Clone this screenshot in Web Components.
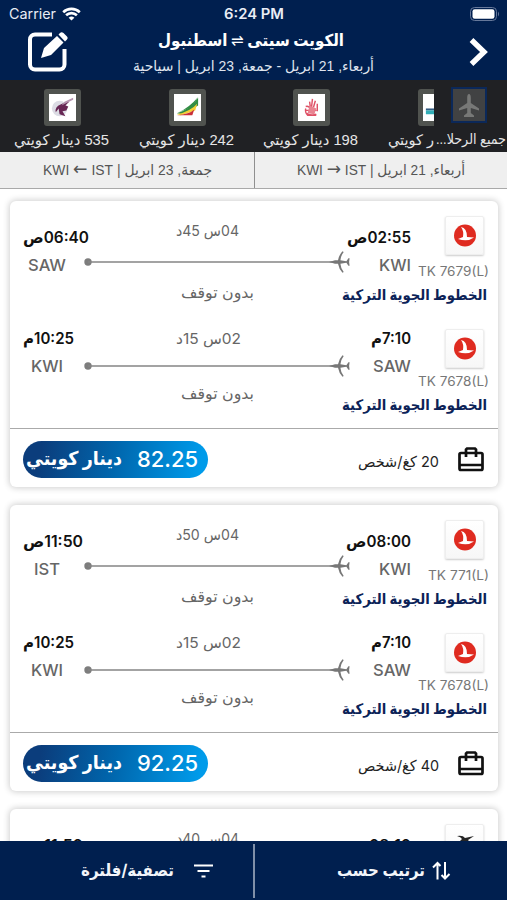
<!DOCTYPE html>
<html lang="ar">
<head>
<meta charset="utf-8">
<title>الكويت سيتى - اسطنبول</title>
<style>
	body {
		margin: 0;
		height: 900px;
		overflow: hidden;
		background: #fff;
		font-family: Inter, "DejaVu Sans", sans-serif;
	}
</style>
</head>
<body>
<flight-results></flight-results>
<script>
/** Attach an open shadow root with the given markup */
function render(el, html) {
	el.attachShadow({mode: "open"}).innerHTML = html;
}

// One line of text, condensed or stretched to the width in its `w` attribute
class FitText extends HTMLElement {
	connectedCallback() {
		if (this.shadowRoot) return;
		const w = Number(this.getAttribute("w"));
		render(this, `
		<style>
			:host {
				display: block;
				flex: none;
				width: ${w}px;
				height: 20px;
				line-height: 20px;
				direction: ltr;
				white-space: nowrap;
			}
			span {
				display: inline-block;
				transform-origin: 0 50%;
			}
		</style>
		<span dir="${this.hasAttribute("ltr") ? "ltr" : "rtl"}"><slot></slot></span>`);
		const span = this.shadowRoot.querySelector("span");
		const natural = span.getBoundingClientRect().width;
		if (natural) span.style.transform = `scaleX(${w / natural})`;
	}
}

class StatusBar extends HTMLElement {
	connectedCallback() {
		render(this, `
		<style>
			:host {
				display: grid;
				grid-template-columns: 1fr auto 1fr;
				align-items: center;
				height: 27px;
				padding: 0 7px 0 9px;
				color: #e9edf5;
				font-size: 14px;
			}
			.carrier { display: flex; align-items: center; gap: 6px; }
			.time { margin-left: -2px; font-weight: 600; }
			.battery { justify-self: end; }
			svg { display: block; }
		</style>
		<div class="carrier">
			<fit-text w="47" ltr>Carrier</fit-text>
			<svg width="19" height="14" viewBox="0 0 19 14" fill="none" stroke="#fff" stroke-width="2.6">
				<path d="M1.2 5.2a12 12 0 0 1 16.6 0M4.1 8.3a7.8 7.8 0 0 1 10.8 0"/>
				<path d="M9.5 13.6 6.6 10.7a4.3 4.3 0 0 1 5.8 0z" fill="#fff" stroke="none"/>
			</svg>
		</div>
		<fit-text class="time" w="60" ltr>6:24 PM</fit-text>
		<svg class="battery" width="30" height="14" viewBox="0 0 30 14">
			<rect x=".5" y=".5" width="26" height="13" rx="4" fill="none" stroke="#66789a"/>
			<rect x="2.5" y="2.3" width="22" height="9.4" rx="2.2" fill="#fff"/>
			<path d="M28 4.5q2 2.5 0 5z" fill="#66789a"/>
		</svg>`);
	}
}

class TripHeader extends HTMLElement {
	connectedCallback() {
		render(this, `
		<style>
			:host {
				display: grid;
				grid-template-columns: 76px 1fr 84px;
				align-items: start;
				box-sizing: border-box;
				height: 53px;
				padding: 0 18px 0 25px;
				color: #fff;
			}
			.edit { margin: 3px 0 0 2px; }
			.next { justify-self: end; margin-top: 10px; }
			.trip {
				display: flex;
				flex-direction: column;
				align-items: center;
				gap: 6px;
				padding-top: 3px;
			}
			.route { margin-right: 5px; font-size: 16.5px; font-weight: bold; }
			.dates { font-family: "Liberation Sans", "DejaVu Sans", sans-serif; font-size: 14.5px; color: #dfe4ee; }
			bdi { font-weight: normal; }
		</style>
		<svg class="edit" width="43" height="43" viewBox="0 0 43 43">
			<path d="M25 4.500H8a5 5 0 0 0-5 5v25a5 5 0 0 0 5 5h24.500a5 5 0 0 0 5-5V19" fill="none" stroke="#fff" stroke-width="4"/>
			<path d="m14 28 3-10L30 6l6.500 6.500L24 25zM31.500 4.500l1.500-1.500q1.500-1.500 3.500 0l3.500 3.500q1.500 1.500 0 3l-2 2z" fill="#fff"/>
		</svg>
		<div class="trip">
			<fit-text class="route" w="186">الكويت سيتى <bdi dir="ltr">⇌</bdi> اسطنبول</fit-text>
			<fit-text class="dates" w="241">أربعاء, 21 ابريل - جمعة, 23 ابريل | سياحية</fit-text>
		</div>
		<svg class="next" width="20" height="30" viewBox="0 0 20 30">
			<path d="m2.500 3 12.500 12-12.500 12" fill="none" stroke="#fff" stroke-width="5.400"/>
		</svg>`);
	}
}

const LOGOS = {
	qatar: `<circle cx="11" cy="15" r="8" fill="#dcdce4"/>
		<path d="M18 8 12 11q-6 2-5 8l3-4 1 6 6 2-3-5 4-1 2-4-3-1 4-4z" fill="#672653"/>
		<path d="m25 4-9 4-3 4 12-6z" fill="#b494ae"/>`,
	ethiopian: `<path d="M25 3 19 13 3 20Q16 14 25 3z" fill="#328d43"/>
		<path d="M25 4v8L9 21l-6-1q14-4 22-16z" fill="#328d43"/>
		<path d="m24 10-2 7-15 5-4-1q14-3 21-11z" fill="#f5cf35"/>
		<path d="m21 16-2 6H3q13-1 18-6z" fill="#c93038"/>`,
	falcon: `<g fill="none" stroke="#df5166" stroke-width="1.500">
		<path d="m15 5-1 9M18 7l-2 7M12 8l1 7M8 13q4-1 5 3M8 17h11M9 20q5 3 10 1M20 10v8M8 15q-1 4 2 7h9"/></g>
		<path d="m12 12 7 3-2 6-7-1z" fill="#e88491"/>`,
	coastal: `<path d="m5 4 8 5 8-4-5 6z" fill="#354d5c"/><path d="M3 15h24v2H3z" fill="#315a81"/><path d="M3 17h24v4H3z" fill="#31aeb7"/>`
};

// Airline with its lowest fare: <airline-tile logo="qatar" w="95">fare</airline-tile>
class AirlineTile extends HTMLElement {
	connectedCallback() {
		render(this, `
		<style>
			:host {
				display: flex;
				flex: none;
				flex-direction: column;
				align-items: center;
				width: 124.700px;
				gap: 4px;
				padding-top: 9px;
				color: #e6e6e6;
			}
			.logo {
				width: 27px;
				height: 27px;
				border: 5px solid #50534f;
				border-radius: 3px;
				background: #fff;
			}
			svg { display: block; }
			fit-text { align-self: flex-start; margin-left: 14px; }
		</style>
		<div class="logo"><svg width="27" height="27" viewBox="0 0 28 28">${LOGOS[this.getAttribute("logo")]}</svg></div>
		<fit-text w="${this.getAttribute("w")}"><slot></slot></fit-text>`);
	}
}

class AirlineStrip extends HTMLElement {
	connectedCallback() {
		render(this, `
		<style>
			:host {
				display: flex;
				height: 72px;
				background: #202124;
				font-family: "Liberation Sans", "DejaVu Sans", sans-serif;
				font-size: 14.500px;
			}
			.tiles { display: flex; width: 434px; overflow: hidden; }
			.all {
				display: flex;
				flex-direction: column;
				align-items: center;
				width: 73px;
				gap: 6px;
				padding-top: 7px;
				color: #e6e6e6;
				font-size: 14px;
			}
			.plane {
				width: 32px;
				height: 32px;
				margin-right: 3px;
				border: 2px solid #0b2859;
				background: #414243;
			}
		</style>
		<div class="tiles">
			<airline-tile logo="qatar" w="95">535 دينار كويتي</airline-tile>
			<airline-tile logo="ethiopian" w="95">242 دينار كويتي</airline-tile>
			<airline-tile logo="falcon" w="95">198 دينار كويتي</airline-tile>
			<airline-tile logo="coastal" w="46">ر كويتي</airline-tile>
		</div>
		<div class="all">
			<div class="plane">
				<svg width="32" height="32" viewBox="0 0 32 32">
					<path d="M16 5q1.800 0 1.800 4v5l8.200 5.500v2l-8.200-2.500v5l3.200 2.500v1.500H11V26.500l3.200-2.500v-5L6 21.500v-2l8.200-5.500V9q0-4 1.800-4z" fill="#777877"/>
				</svg>
			</div>
			<fit-text w="70">جميع الرحلا...</fit-text>
		</div>`);
	}
}

class LegTabs extends HTMLElement {
	connectedCallback() {
		render(this, `
		<style>
			:host {
				display: grid;
				grid-template-columns: 254px 1fr;
				box-sizing: border-box;
				height: 37px;
				border-bottom: 1px solid #a9a9a9;
				background: #efefef;
				color: #555;
				font: 14.500px "Liberation Sans", "DejaVu Sans", sans-serif;
			}
			div { display: flex; align-items: center; justify-content: center; }
			div + div { border-left: 1px solid #8f8f8f; }
			b { font: 18px/1 "DejaVu Sans", sans-serif; }
		</style>
		<div><fit-text w="169">جمعة, 23 ابريل | <bdi dir="ltr">KWI <b>←</b> IST</bdi></fit-text></div>
		<div><fit-text w="168">أربعاء, 21 ابريل | <bdi dir="ltr">KWI <b>→</b> IST</bdi></fit-text></div>`);
	}
}

class FlightLeg extends HTMLElement {
	// Texts come as "text|width" pairs, since each is set to its own width
	text(name, cls, extra = "") {
		const [t, w] = this.getAttribute(name).split("|");
		return `<fit-text class="${cls}" w="${w}" ${extra}>${t}</fit-text>`;
	}
	connectedCallback() {
		const turkish = `
			<circle cx="20" cy="19.500" r="11" fill="#df2b20"/>
			<path d="M16 11q6 1 6 10l7 .5q-6 4.500-16 1.500l5-2q1-6-2-10z" fill="#fff"/>`;
		const bird = `
			<path d="M12 12q6-1 8 2l9-2-6 4 4 5-7-4-7 2 4-4q-1-2-5-3z" fill="#252525"/>`;
		render(this, `
		<style>
			:host {
				--start: 27px;
				--code-gap: 7px;
				--mid-start: 20px;
				--line-gap: 9px;
				--stops-gap: 9px;
				--logo-start: 15px;
				--number-gap: 6px;
				display: grid;
				grid-template-columns: 61px 267px 60px 77px;
				height: 112px;
				padding: 0 10px 0 13px;
				color: #666;
			}
			:host([return]) {
				--start: 16px;
				--code-gap: 7px;
				--mid-start: 16px;
				--line-gap: 5px;
				--stops-gap: 6px;
				--logo-start: 16px;
				--number-gap: 3px;
				height: 115px;
			}
			.end { display: flex; flex-direction: column; gap: var(--code-gap); padding-top: var(--start); }
			.from { align-items: flex-end; }
			.under { display: flex; justify-content: center; width: 48px; }
			.time { color: #111; font-size: 15.500px; font-weight: 600; }
			.code { font-size: 16px; font-weight: 500; }
			.mid { padding-top: var(--mid-start); }
			.duration { margin-left: 92px; font-size: 15px; }
			.stops { margin-left: 97px; font-size: 15.500px; }
			.line { display: block; margin: var(--line-gap) 0 var(--stops-gap); }
			.airline { display: flex; flex-direction: column; align-items: flex-end; padding-top: var(--logo-start); }
			.logo {
				box-sizing: border-box;
				width: 39px;
				height: 39px;
				margin-right: 4px;
				border: 1px solid #eee;
				border-radius: 2px;
				background: linear-gradient(#fff, #f7f7f7);
				box-shadow: 0 1px 2px #ccc;
			}
			.logo svg { display: block; margin: -1px; }
			.number { margin-top: var(--number-gap); margin-right: -1px; color: #777; font-size: 13px; }
			.name { margin-top: 4px; margin-right: 1px; color: #0c2358; font-size: 14.500px; font-weight: bold; }
		</style>
		<div class="end">
			${this.text("arrive", "time")}
			${this.hasAttribute("to") ? `<div class="under">${this.text("to", "code", "ltr")}</div>` : ""}
		</div>
		<div class="mid">
			${this.text("duration", "duration")}
			${this.hasAttribute("stops") ? `
			<svg class="line" width="267" height="24" viewBox="0 0 267 24">
				<circle cx="4" cy="12" r="3.700" fill="#7d7d7d"/>
				<path d="M4 12h244" stroke="#858585" stroke-width="1.500"/>
				<path d="m245 12 6-1.700h3q1-5.500 4.500-9l1.200.6q-3 4-3.300 8.400l6 1 2-3h1.200l-.5 3.700.5 3.700h-1.200l-2-3-6 1q.3 4.400 3.300 8.400l-1.200.6q-3.500-3.500-4.500-9h-3z" fill="#777"/>
			</svg>
			${this.text("stops", "stops")}` : ""}
		</div>
		<div class="end from">
			${this.text("depart", "time")}
			${this.hasAttribute("from") ? this.text("from", "code", "ltr") : ""}
		</div>
		<div class="airline">
			<div class="logo"><svg width="39" height="39" viewBox="0 0 39 39">${this.hasAttribute("bird") ? bird : turkish}</svg></div>
			${this.hasAttribute("number") ? this.text("number", "number", "ltr") : ""}
			${this.hasAttribute("airline") ? this.text("airline", "name") : ""}
		</div>`);
	}
}

class FlightCard extends HTMLElement {
	connectedCallback() {
		const price = this.getAttribute("price");
		render(this, `
		<style>
			:host {
				display: block;
				flex: none;
				height: 286px;
				border-radius: 6px;
				background: #fff;
				box-shadow: 0 0 6px 1px #cfcfcf;
			}
			footer {
				display: flex;
				align-items: center;
				justify-content: space-between;
				box-sizing: border-box;
				height: 59px;
				padding: 2px 14px 0 13px;
				border-top: 1px solid #aaa;
			}
			.price {
				display: flex;
				align-items: center;
				box-sizing: border-box;
				width: 185px;
				height: 37px;
				gap: 15px;
				padding-left: 3px;
				border-radius: 19px;
				background: linear-gradient(100deg, #0b3d7c 10%, #0067ae 50%, #009bea 95%);
				color: #fff;
			}
			.amount { font-size: 22px; font-weight: 500; }
			.currency { font-size: 19px; font-weight: bold; }
			.bags { display: flex; align-items: center; gap: 18px; color: #222; font-size: 15px; }
			.bags fit-text { margin: 6px 1px 0 0; }
			.bags svg { margin-top: 1px; }
		</style>
		<slot></slot>
		${price ? `
		<footer>
			<div class="price">
				<fit-text class="currency" w="96">دينار كويتي</fit-text>
				<fit-text class="amount" w="61" ltr>${price}</fit-text>
			</div>
			<div class="bags">
				<fit-text w="81">${this.getAttribute("bags")} كغ/شخص</fit-text>
				<svg width="26" height="25" viewBox="0 0 26 25" fill="none" stroke="#111" stroke-width="2.700">
					<rect x="1.500" y="6" width="23" height="17" rx="1.500"/>
					<path d="M8 10V2.500l1-1h8l1 1V10M2 18h22"/>
				</svg>
			</div>
		</footer>` : ""}`);
	}
}

class ActionBar extends HTMLElement {
	connectedCallback() {
		render(this, `
		<style>
			:host {
				display: grid;
				flex: none;
				grid-template-columns: 1fr 2px 1fr;
				height: 59px;
				background: #001f4f;
				color: #f2f5fa;
				font-size: 16.500px;
				font-weight: bold;
			}
			div { display: flex; align-items: center; }
			.filter { gap: 20px; padding-left: 81px; }
			.sort { gap: 7px; padding-left: 82px; }
			fit-text { margin-top: -1px; }
			i { margin: 3px 0 2px; background: #7f8fa8; }
		</style>
		<div class="filter">
			<fit-text w="93">تصفية/فلترة</fit-text>
			<svg width="20" height="14" viewBox="0 0 20 14" stroke="#fff" stroke-width="2.200">
				<path d="M0 1.500h19M3.500 7h12M7.500 12.500h4"/>
			</svg>
		</div>
		<i></i>
		<div class="sort">
			<fit-text w="88">ترتيب حسب</fit-text>
			<svg width="19" height="20" viewBox="0 0 19 20" fill="none" stroke="#fff" stroke-width="2">
				<path d="M5.500 18.500V2M1 6.500 5.500 2 8.500 5M13 1v16.500M9.500 14l3.500 3.500 4.500-4.500"/>
			</svg>
		</div>`);
	}
}

class FlightResults extends HTMLElement {
	connectedCallback() {
		const shared = `stops="بدون توقف|73" airline="الخطوط الجوية التركية|145"`;
		render(this, `
		<style>
			:host { display: flex; flex-direction: column; width: 507px; height: 900px; }
			header { background: #001f4f; }
			main {
				display: flex;
				flex: 1;
				flex-direction: column;
				gap: 18px;
				min-height: 0;
				padding: 12px 9px 0 10px;
				overflow: hidden;
			}
		</style>
		<header>
			<status-bar></status-bar>
			<trip-header></trip-header>
		</header>
		<airline-strip></airline-strip>
		<leg-tabs></leg-tabs>
		<main>
			<flight-card price="82.25" bags="20">
				<flight-leg depart="02:55ص|64" from="KWI|32" arrive="06:40ص|66" to="SAW|38" duration="04س 45د|63" number="TK 7679(L)|71" ${shared}></flight-leg>
				<flight-leg return depart="7:10م|40" from="SAW|38" arrive="10:25م|51" to="KWI|32" duration="02س 15د|65" number="TK 7678(L)|71" ${shared}></flight-leg>
			</flight-card>
			<flight-card price="92.25" bags="40">
				<flight-leg depart="08:00ص|65" from="KWI|32" arrive="11:50ص|60" to="IST|26" duration="04س 50د|63" number="TK 771(L)|61" ${shared}></flight-leg>
				<flight-leg return depart="7:10م|40" from="SAW|38" arrive="10:25م|51" to="KWI|32" duration="02س 15د|65" number="TK 7678(L)|71" ${shared}></flight-leg>
			</flight-card>
			<flight-card>
				<flight-leg bird depart="08:10ص|63" arrive="11:50ص|60" duration="04س 40د|63"></flight-leg>
			</flight-card>
		</main>
		<action-bar></action-bar>`);
	}
}

customElements.define("flight-results", FlightResults);
customElements.define("status-bar", StatusBar);
customElements.define("trip-header", TripHeader);
customElements.define("airline-strip", AirlineStrip);
customElements.define("airline-tile", AirlineTile);
customElements.define("leg-tabs", LegTabs);
customElements.define("flight-card", FlightCard);
customElements.define("flight-leg", FlightLeg);
customElements.define("action-bar", ActionBar);
// Last, so that every line is measured in its final place and font
customElements.define("fit-text", FitText);
</script>
</body>
</html>
